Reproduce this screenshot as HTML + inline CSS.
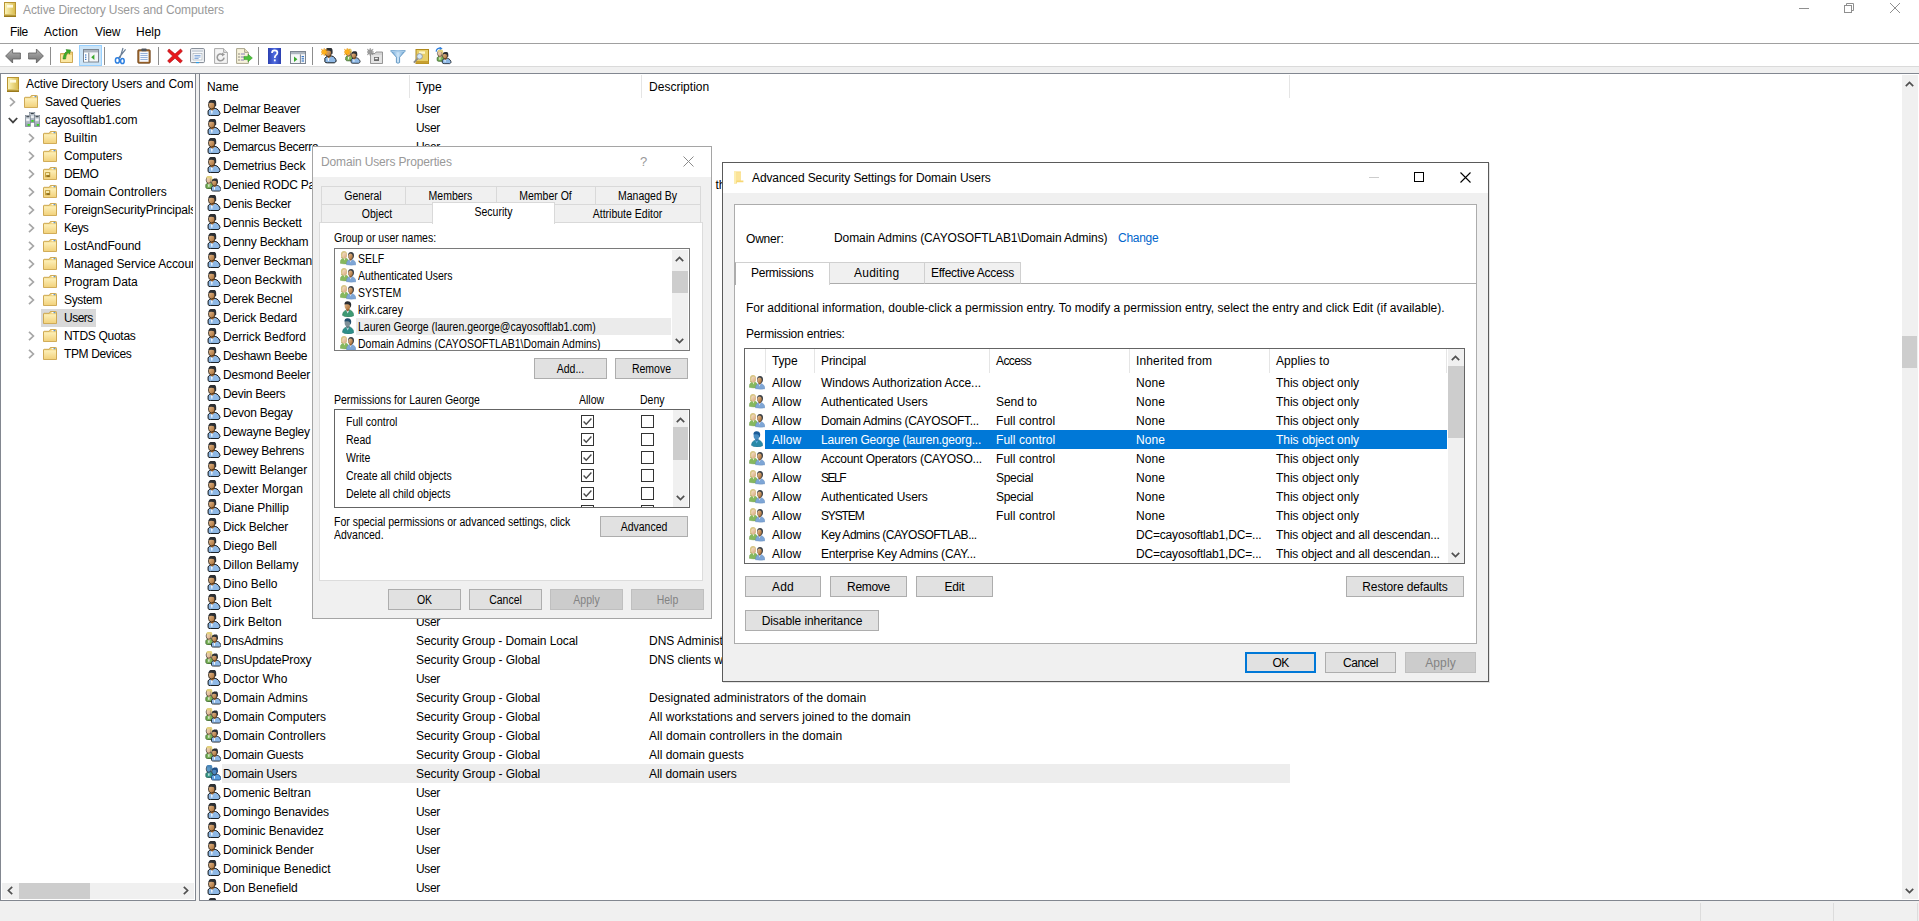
<!DOCTYPE html>
<html><head><meta charset="utf-8"><title>Active Directory Users and Computers</title>
<style>
html,body{margin:0;padding:0;}
body{width:1919px;height:921px;overflow:hidden;position:relative;background:#fff;font-family:"Liberation Sans", sans-serif;}
.b{position:absolute;box-sizing:border-box;}
.t{position:absolute;white-space:pre;font-family:"Liberation Sans", sans-serif;}
.c{position:absolute;overflow:hidden;}
</style></head><body>
<svg width="0" height="0" style="position:absolute"><defs><linearGradient id="gface" x1="0" y1="0" x2="1" y2="1"><stop offset="0" stop-color="#e9c49a"/><stop offset="1" stop-color="#a5672c"/></linearGradient><linearGradient id="gface2" x1="0" y1="0" x2="1" y2="1"><stop offset="0" stop-color="#f6e2c8"/><stop offset="1" stop-color="#d5a57c"/></linearGradient><linearGradient id="gfold" x1="0" y1="0" x2="0" y2="1"><stop offset="0" stop-color="#fdf0b9"/><stop offset="1" stop-color="#f2d27c"/></linearGradient><linearGradient id="gbook" x1="0" y1="0" x2="1" y2="0"><stop offset="0" stop-color="#fbf3b8"/><stop offset="1" stop-color="#d9bc4e"/></linearGradient><linearGradient id="gsrv" x1="0" y1="0" x2="0" y2="1"><stop offset="0" stop-color="#e8edf2"/><stop offset="1" stop-color="#8c99a6"/></linearGradient><linearGradient id="ghelp" x1="0" y1="0" x2="1" y2="0"><stop offset="0" stop-color="#2b3fb0"/><stop offset=".5" stop-color="#4f6be0"/><stop offset="1" stop-color="#2b3fb0"/></linearGradient><linearGradient id="gfun" x1="0" y1="0" x2="1" y2="0"><stop offset="0" stop-color="#5e9bd0"/><stop offset=".5" stop-color="#cfe6f8"/><stop offset="1" stop-color="#5e9bd0"/></linearGradient><linearGradient id="garr" x1="0" y1="0" x2="0" y2="1"><stop offset="0" stop-color="#b5b5b5"/><stop offset="1" stop-color="#6e6e6e"/></linearGradient><symbol id="u" viewBox="0 0 14 16" overflow="visible"><g transform="translate(0 0) scale(1)">
<path d="M1.1 14.6 L1.1 10.9 Q1.9 9.2 4.2 8.8 L8.2 8.4 Q10.2 8.7 11.6 10.5 Q13 12.4 13 13.7 Q12.6 15 11 15.6 L3.6 15.6 Q1.6 15.6 1.1 14.6Z" fill="#8fb9e6" stroke="#0c1116" stroke-width="1"/>
<path d="M3.9 10.5 L5.7 10.2 L5.3 13.8 L4.4 13.8Z" fill="#fff" opacity=".9"/>
<path d="M3.5 6.6 L7.1 6.6 L7.5 8.9 L5.1 10.7 L3.6 9.3Z" fill="#a5672c"/>
<ellipse cx="4.7" cy="5" rx="3.3" ry="4" fill="url(#gface)" stroke="#1c1814" stroke-width=".7"/>
<path d="M1.6 3 Q1.5 0 4.6 -0.2 L7.7 -0.2 Q9.2 0.8 9.2 3 L9.2 5.8 L7.9 6.8 L7.5 3.4 Q5.4 2.2 1.6 3Z" fill="#2d3034"/>
</g></symbol><symbol id="ug" viewBox="0 0 12 16" overflow="visible"><path d="M0.4 14.3 Q0.5 10.9 2.9 9.7 L4.8 8.7 L7.7 8.7 Q10.3 9.9 11.2 12 Q11.9 13.6 11.7 14.7 Q9.4 15.9 6 15.9 Q2.4 15.9 0.4 14.3Z" fill="#3f9a74" stroke="#2c7a58" stroke-width=".5"/>
<path d="M4.3 9.4 L5.7 12.6 L7.1 9.4 L6.2 9 L5 9Z" fill="#eef"/>
<path d="M4.2 6.6 L7.2 6.6 L7.3 9 L5.7 10.6 L4.2 9Z" fill="#9a6030"/>
<ellipse cx="5.5" cy="4.8" rx="2.9" ry="3.7" fill="url(#gface)"/>
<path d="M2.5 3.6 Q2.2 0.4 5.4 0.2 Q8.9 0.1 9.2 3.2 Q9.4 5.6 8.2 6.8 L7.9 4.4 Q6.6 2.6 2.5 3.6Z" fill="#2a2d30"/></symbol><symbol id="ud" viewBox="0 0 12 16" overflow="visible"><path d="M0.4 14.3 Q0.5 10.9 2.9 9.7 L4.8 8.7 L7.7 8.7 Q10.3 9.9 11.2 12 Q11.9 13.6 11.7 14.7 Q9.4 15.9 6 15.9 Q2.4 15.9 0.4 14.3Z" fill="#2d8d88" stroke="#1f6f6c" stroke-width=".5"/>
<path d="M4.3 9.4 L5.7 12.6 L7.1 9.4 L6.2 9 L5 9Z" fill="#bfe0e8"/>
<path d="M4.2 6.6 L7.2 6.6 L7.3 9 L5.7 10.6 L4.2 9Z" fill="#63777d"/>
<ellipse cx="5.5" cy="4.8" rx="2.9" ry="3.7" fill="#7f9097"/>
<path d="M2.5 3.6 Q2.2 0.4 5.4 0.2 Q8.9 0.1 9.2 3.2 Q9.4 5.6 8.2 6.8 L7.9 4.4 Q6.6 2.6 2.5 3.6Z" fill="#24506e"/></symbol><symbol id="us" viewBox="0 0 12 16" overflow="visible"><path d="M0.4 14.3 Q0.5 10.9 2.9 9.7 L4.8 8.7 L7.7 8.7 Q10.3 9.9 11.2 12 Q11.9 13.6 11.7 14.7 Q9.4 15.9 6 15.9 Q2.4 15.9 0.4 14.3Z" fill="#2a8aa8" stroke="#1f7090" stroke-width=".5"/>
<path d="M4.3 9.4 L5.7 12.6 L7.1 9.4 L6.2 9 L5 9Z" fill="#6ab8e8"/>
<path d="M4.2 6.6 L7.2 6.6 L7.3 9 L5.7 10.6 L4.2 9Z" fill="#3474a8"/>
<ellipse cx="5.5" cy="4.8" rx="2.9" ry="3.7" fill="#4a8ec2"/>
<path d="M2.5 3.6 Q2.2 0.4 5.4 0.2 Q8.9 0.1 9.2 3.2 Q9.4 5.6 8.2 6.8 L7.9 4.4 Q6.6 2.6 2.5 3.6Z" fill="#1b5c98"/></symbol><symbol id="g" viewBox="0 0 16 16" overflow="visible"><g transform="translate(0 0) scale(0.8)">
<path d="M1.1 14.6 L1.1 10.9 Q1.9 9.2 4.2 8.8 L8.2 8.4 Q10.2 8.7 11.6 10.5 Q13 12.4 13 13.7 Q12.6 15 11 15.6 L3.6 15.6 Q1.6 15.6 1.1 14.6Z" fill="#7db55c" stroke="#2f5a1e" stroke-width="1"/>
<path d="M3.9 10.5 L5.7 10.2 L5.3 13.8 L4.4 13.8Z" fill="#fff" opacity=".9"/>
<path d="M3.5 6.6 L7.1 6.6 L7.5 8.9 L5.1 10.7 L3.6 9.3Z" fill="#e0b48c"/>
<ellipse cx="4.7" cy="5" rx="3.3" ry="4" fill="url(#gface2)" stroke="#1c1814" stroke-width=".7"/>
<path d="M1.6 3 Q1.5 0 4.6 -0.2 L7.7 -0.2 Q9.2 0.8 9.2 3 L9.2 5.8 L7.9 6.8 L7.5 3.4 Q5.4 2.2 1.6 3Z" fill="#e3d07c"/>
</g><g transform="translate(5.6 2.6) scale(0.8)">
<path d="M1.1 14.6 L1.1 10.9 Q1.9 9.2 4.2 8.8 L8.2 8.4 Q10.2 8.7 11.6 10.5 Q13 12.4 13 13.7 Q12.6 15 11 15.6 L3.6 15.6 Q1.6 15.6 1.1 14.6Z" fill="#8fb9e6" stroke="#0c1116" stroke-width="1"/>
<path d="M3.9 10.5 L5.7 10.2 L5.3 13.8 L4.4 13.8Z" fill="#fff" opacity=".9"/>
<path d="M3.5 6.6 L7.1 6.6 L7.5 8.9 L5.1 10.7 L3.6 9.3Z" fill="#a5672c"/>
<ellipse cx="4.7" cy="5" rx="3.3" ry="4" fill="url(#gface)" stroke="#1c1814" stroke-width=".7"/>
<path d="M1.6 3 Q1.5 0 4.6 -0.2 L7.7 -0.2 Q9.2 0.8 9.2 3 L9.2 5.8 L7.9 6.8 L7.5 3.4 Q5.4 2.2 1.6 3Z" fill="#2d3034"/>
</g></symbol><symbol id="gs" viewBox="0 0 16 16" overflow="visible"><g transform="translate(0 0) scale(0.8)">
<path d="M1.1 14.6 L1.1 10.9 Q1.9 9.2 4.2 8.8 L8.2 8.4 Q10.2 8.7 11.6 10.5 Q13 12.4 13 13.7 Q12.6 15 11 15.6 L3.6 15.6 Q1.6 15.6 1.1 14.6Z" fill="#3a9a8a" stroke="#1e5a50" stroke-width="1"/>
<path d="M3.9 10.5 L5.7 10.2 L5.3 13.8 L4.4 13.8Z" fill="#fff" opacity=".9"/>
<path d="M3.5 6.6 L7.1 6.6 L7.5 8.9 L5.1 10.7 L3.6 9.3Z" fill="#4a88b8"/>
<ellipse cx="4.7" cy="5" rx="3.3" ry="4" fill="#5a98c8" stroke="#1c1814" stroke-width=".7"/>
<path d="M1.6 3 Q1.5 0 4.6 -0.2 L7.7 -0.2 Q9.2 0.8 9.2 3 L9.2 5.8 L7.9 6.8 L7.5 3.4 Q5.4 2.2 1.6 3Z" fill="#4a86b8"/>
</g><g transform="translate(5.6 2.6) scale(0.8)">
<path d="M1.1 14.6 L1.1 10.9 Q1.9 9.2 4.2 8.8 L8.2 8.4 Q10.2 8.7 11.6 10.5 Q13 12.4 13 13.7 Q12.6 15 11 15.6 L3.6 15.6 Q1.6 15.6 1.1 14.6Z" fill="#5aa0e0" stroke="#153a6a" stroke-width="1"/>
<path d="M3.9 10.5 L5.7 10.2 L5.3 13.8 L4.4 13.8Z" fill="#fff" opacity=".9"/>
<path d="M3.5 6.6 L7.1 6.6 L7.5 8.9 L5.1 10.7 L3.6 9.3Z" fill="#2d67a0"/>
<ellipse cx="4.7" cy="5" rx="3.3" ry="4" fill="#4a86c0" stroke="#1c1814" stroke-width=".7"/>
<path d="M1.6 3 Q1.5 0 4.6 -0.2 L7.7 -0.2 Q9.2 0.8 9.2 3 L9.2 5.8 L7.9 6.8 L7.5 3.4 Q5.4 2.2 1.6 3Z" fill="#1f4f86"/>
</g></symbol><symbol id="gd" viewBox="0 0 16 16" overflow="visible"><path d="M0.2 12.3 Q0.1 8.8 2.2 7.6 L4 6.8 L6.2 7 Q8.2 8.2 8.4 10 L8.4 12.7 Q4 13.3 0.2 12.3Z" fill="#86b85e" stroke="#6f9f4c" stroke-width=".4"/>
<path d="M3.6 7 L4.5 9.6 L5.4 7.2Z" fill="#eef6e6"/>
<ellipse cx="4" cy="3.7" rx="3.1" ry="3.7" fill="#d6c583"/>
<path d="M1.2 5.4 Q0.8 7 1.8 7.4 L3 6.6Z" fill="#bfae6c"/>
<ellipse cx="4.5" cy="4.4" rx="2.2" ry="2.8" fill="url(#gface2)"/>
<path d="M6.4 13.7 Q6.3 10 8.6 8.9 L10.2 8.2 L12.4 8.4 Q15 9.7 15.7 12 L15.9 13.8 Q11 14.5 6.4 13.7Z" fill="#7ea6d6" stroke="#6288b8" stroke-width=".4"/>
<path d="M9.6 8.6 L10.6 11.4 L11.6 8.8Z" fill="#eef4fb"/>
<path d="M9.4 6.6 L12 6.6 L12 8.6 L10.6 9.8 L9.4 8.6Z" fill="#9a6030"/>
<ellipse cx="11" cy="4.6" rx="3" ry="3.6" fill="#3a3f45"/>
<ellipse cx="10.5" cy="5.3" rx="2.2" ry="2.8" fill="url(#gface)"/></symbol><symbol id="f" viewBox="0 0 14 13"><path d="M7.3 0.5 H12.7 Q13.5 0.5 13.5 1.3 V12.5 H0.5 V3 Q0.5 2.3 1.2 2.3 H6.3 Z" fill="#f1d27a" stroke="#c8a24a" stroke-width=".9"/>
<rect x="1" y="3.3" width="12" height="8.8" fill="url(#gfold)"/>
<rect x="8.6" y="1.1" width="2.2" height="1.1" fill="#fff"/><rect x="10.6" y="1.1" width="1.7" height="1.1" fill="#4a8fe0"/></symbol><symbol id="fo" viewBox="0 0 14 13"><path d="M7.3 0.5 H12.7 Q13.5 0.5 13.5 1.3 V12.5 H0.5 V3 Q0.5 2.3 1.2 2.3 H6.3 Z" fill="#f1d27a" stroke="#c8a24a" stroke-width=".9"/>
<rect x="1" y="3.3" width="12" height="8.8" fill="url(#gfold)"/>
<rect x="8.6" y="1.1" width="2.2" height="1.1" fill="#fff"/><rect x="10.6" y="1.1" width="1.7" height="1.1" fill="#4a8fe0"/><rect x="2.2" y="5.2" width="5" height="5" fill="#b8932f"/><rect x="3" y="6" width="3.2" height="2" fill="#f6e7a8"/><rect x="4.2" y="8.6" width="2.4" height="1" fill="#6b4f12"/></symbol><symbol id="rb" viewBox="0 0 12 15"><rect x="0" y="0" width="12" height="15" fill="#b89432"/><rect x="1" y="1" width="10" height="11" fill="url(#gbook)"/><rect x="0.6" y="12" width="10.8" height="1.5" fill="#d9c268"/><rect x="3" y="2.8" width="6" height="2.8" fill="#fffbe0"/><rect x="0" y="13.6" width="12" height="1.4" fill="#9a7a1c"/></symbol><symbol id="dom" viewBox="0 0 15 15"><g><rect x="4.6" y="0.3" width="5.2" height="10" fill="url(#gsrv)" stroke="#6f7a86" stroke-width=".6"/><rect x="5.6" y="1" width="3.2" height="1.2" fill="#39424c"/><rect x="5.6" y="4.2" width="3.2" height="1.6" fill="#f4f6f8"/><rect x="6.4" y="8" width="2.2" height="1.8" fill="#37d51f"/></g>
<g><rect x="0.3" y="3.3" width="5.2" height="11.2" fill="url(#gsrv)" stroke="#6f7a86" stroke-width=".6"/><rect x="1.3" y="4.1" width="3.2" height="1.2" fill="#39424c"/><rect x="1.3" y="7" width="3.2" height="1.8" fill="#f4f6f8"/><rect x="2.6" y="12" width="2.2" height="1.8" fill="#37d51f"/></g>
<g><rect x="9.5" y="3.3" width="5.2" height="11.2" fill="url(#gsrv)" stroke="#6f7a86" stroke-width=".6"/><rect x="10.5" y="4.1" width="3.2" height="1.2" fill="#39424c"/><rect x="10.5" y="7" width="3.2" height="1.8" fill="#f4f6f8"/><rect x="11.8" y="12" width="2.2" height="1.8" fill="#37d51f"/></g></symbol><symbol id="chr" viewBox="0 0 7 10"><path d="M1 0.8 L5.4 5 L1 9.2" fill="none" stroke="#a6a6a6" stroke-width="1.7"/></symbol><symbol id="chd" viewBox="0 0 10 7"><path d="M0.8 1 L5 5.4 L9.2 1" fill="none" stroke="#404040" stroke-width="1.8"/></symbol><symbol id="au" viewBox="0 0 9 6"><path d="M0.8 5.2 L4.5 1.4 L8.2 5.2" fill="none" stroke="#505050" stroke-width="1.7"/></symbol><symbol id="ad" viewBox="0 0 9 6"><path d="M0.8 0.8 L4.5 4.6 L8.2 0.8" fill="none" stroke="#505050" stroke-width="1.7"/></symbol><symbol id="al" viewBox="0 0 6 9"><path d="M5.2 0.8 L1.4 4.5 L5.2 8.2" fill="none" stroke="#505050" stroke-width="1.7"/></symbol><symbol id="ar" viewBox="0 0 6 9"><path d="M0.8 0.8 L4.6 4.5 L0.8 8.2" fill="none" stroke="#505050" stroke-width="1.7"/></symbol></defs></svg><svg class="b" style="left:4px;top:2px;" width="12" height="15" viewBox="0 0 12 15"><use href="#rb"/></svg><span class="t" style="left:23px;top:4px;font-size:12px;line-height:12px;color:#999;letter-spacing:-0.09px;">Active Directory Users and Computers</span><svg class="b" style="left:1799px;top:4px;" width="12" height="12" viewBox="0 0 12 12"><path d="M0 4.5 H10" stroke="#8f8f8f" stroke-width="1"/></svg><svg class="b" style="left:1844px;top:3px;" width="12" height="12" viewBox="0 0 12 12"><path d="M2.5 2.5 V0.5 H9.5 V7.5 H7.5" fill="none" stroke="#8f8f8f"/><rect x="0.5" y="2.5" width="7" height="7" fill="none" stroke="#8f8f8f"/></svg><svg class="b" style="left:1890px;top:3px;" width="12" height="12" viewBox="0 0 12 12"><path d="M0 0 L10 10 M10 0 L0 10" stroke="#8f8f8f" stroke-width="1"/></svg><span class="t" style="left:10px;top:26px;font-size:12px;line-height:12px;color:#000;letter-spacing:-0.349px;">File</span><span class="t" style="left:44px;top:26px;font-size:12px;line-height:12px;color:#000;letter-spacing:0.12px;">Action</span><span class="t" style="left:95px;top:26px;font-size:12px;line-height:12px;color:#000;letter-spacing:-0.127px;">View</span><span class="t" style="left:136px;top:26px;font-size:12px;line-height:12px;color:#000;letter-spacing:0.017px;">Help</span><div class="b" style="left:0px;top:43px;width:1919px;height:1px;background:#a0a0a0;"></div><div class="b" style="left:0px;top:66px;width:1919px;height:1px;background:#dadada;"></div><div class="b" style="left:0px;top:67px;width:1919px;height:6px;background:#f0f0f0;"></div><div class="b" style="left:0px;top:73px;width:1919px;height:1px;background:#828790;"></div><svg class="b" style="left:5px;top:48px;" width="16" height="16" viewBox="0 0 16 16"><path d="M0.6 8 L7.6 1 V5 H15.4 V11 H7.6 V15 Z" fill="url(#garr)" stroke="#5a5a5a" stroke-width=".8"/></svg><svg class="b" style="left:28px;top:48px;" width="16" height="16" viewBox="0 0 16 16"><path d="M15.4 8 L8.4 1 V5 H0.6 V11 H8.4 V15 Z" fill="url(#garr)" stroke="#5a5a5a" stroke-width=".8"/></svg><div class="b" style="left:50px;top:47px;width:1px;height:18px;background:#8d8d8d;"></div><svg class="b" style="left:59px;top:48px;" width="16" height="16" viewBox="0 0 16 16"><path d="M1.5 5.5 H6 L7 4 H13.5 V14.5 H1.5Z" fill="#f3d27a" stroke="#c8a24a" stroke-width=".9"/><rect x="2" y="7" width="11" height="7" fill="#fbe7a2"/><path d="M4 11 Q4.5 5 8 3.4 L7 1.6 L11.6 2 L10.4 6.2 L9.4 4.6 Q6.8 6 6.6 11Z" fill="#3fae2a" stroke="#1f7a12" stroke-width=".5"/></svg><div class="b" style="left:79px;top:45px;width:23px;height:21px;background:#cce4f7;border:1px solid #99d1ff;"></div><svg class="b" style="left:83px;top:49px;" width="16" height="14" viewBox="0 0 16 14"><rect x=".5" y=".5" width="15" height="12.5" fill="#f4f6f8" stroke="#7d8590"/><rect x="1" y="1" width="14" height="2.4" fill="#aeb6c0"/><rect x="1" y="4" width="4.4" height="8.6" fill="#fff"/><path d="M5.8 3.6 V13" stroke="#7d8590"/><rect x="2" y="5.4" width="1.4" height="1.2" fill="#3a78c8"/><rect x="2" y="7.6" width="1.4" height="1.2" fill="#3a78c8"/><rect x="2" y="9.8" width="1.4" height="1.2" fill="#3a78c8"/><path d="M11.4 5.6 V11 L8.2 8.3Z" fill="#3aa82c"/></svg><div class="b" style="left:104px;top:47px;width:1px;height:18px;background:#8d8d8d;"></div><svg class="b" style="left:114px;top:47px;" width="14" height="18" viewBox="0 0 14 18"><path d="M9 1 L6 11 M11.6 2.4 L4.6 11" stroke="#6b7f96" stroke-width="1.2" fill="none"/><ellipse cx="3.4" cy="13.4" rx="2" ry="2.6" fill="none" stroke="#2d7fe0" stroke-width="1.5"/><ellipse cx="8.4" cy="14" rx="1.8" ry="2.6" fill="none" stroke="#2d7fe0" stroke-width="1.5"/></svg><svg class="b" style="left:137px;top:48px;" width="14" height="16" viewBox="0 0 14 16"><rect x=".8" y="1.8" width="12.4" height="13.4" rx="1" fill="#a0672c" stroke="#6b3f14" stroke-width=".8"/><rect x="2.4" y="3.4" width="9.2" height="10.4" fill="#f4f8ff"/><path d="M3.4 5.5 H10.6 M3.4 7.5 H10.6 M3.4 9.5 H10.6 M3.4 11.5 H10.6" stroke="#7f9fd0" stroke-width=".8"/><rect x="4.4" y=".6" width="5.2" height="2.6" rx=".6" fill="#50555c"/></svg><div class="b" style="left:158px;top:47px;width:1px;height:18px;background:#8d8d8d;"></div><svg class="b" style="left:167px;top:48px;" width="16" height="16" viewBox="0 0 16 16"><path d="M2 1 L8 6 L13.6 1 L15.4 3.2 L10.4 8 L15.4 13 L13.2 15 L8 10.2 L2.6 15 L0.6 12.8 L5.6 8 L0.6 3.2Z" fill="#e8181c" stroke="#a30c10" stroke-width=".6"/></svg><svg class="b" style="left:190px;top:48px;" width="15" height="16" viewBox="0 0 15 16"><rect x=".6" y=".6" width="13.8" height="14" rx="1" fill="#f6f8fa" stroke="#7d8590"/><rect x="2" y="2" width="11" height="2" fill="#cfd6de"/><rect x="3" y="5.6" width="9" height="6.4" fill="#fff" stroke="#9aa4b0" stroke-width=".6"/><path d="M4.4 7.4 H10.6 M4.4 9 H10.6 M4.4 10.6 H8.6" stroke="#5e8fcf" stroke-width=".8"/><rect x="6" y="14" width="3" height="1.2" fill="#2d9fe8"/></svg><svg class="b" style="left:214px;top:48px;" width="14" height="16" viewBox="0 0 14 16"><path d="M.6 .6 H9.6 L13.4 4.4 V15.4 H.6Z" fill="#f4f4f4" stroke="#a8a8a8"/><path d="M9.6 .6 V4.4 H13.4" fill="#e0e0e0" stroke="#a8a8a8"/><path d="M10 9.6 A3.4 3.4 0 1 1 8.6 6.6" fill="none" stroke="#9a9a9a" stroke-width="1.6"/><path d="M8 4.6 L11 6.6 L8 8.6Z" fill="#9a9a9a"/></svg><svg class="b" style="left:236px;top:48px;" width="17" height="16" viewBox="0 0 17 16"><path d="M.6 .6 H8.6 L12.4 4.4 V15.4 H.6Z" fill="#f8f3dc" stroke="#a8a48c"/><path d="M8.6 .6 V4.4 H12.4" fill="#e8e2c0" stroke="#a8a48c"/><path d="M2.4 6 H3.6 M2.4 9 H3.6 M2.4 12 H3.6" stroke="#444" stroke-width="1"/><path d="M4.8 6 H9 M4.8 9 H8 M4.8 12 H8" stroke="#7a6fb0" stroke-width=".9"/><path d="M8 8.4 H12 V6.2 L16.4 10 L12 13.8 V11.6 H8Z" fill="#4cc23a" stroke="#2a8a1c" stroke-width=".5"/></svg><div class="b" style="left:258px;top:47px;width:1px;height:18px;background:#8d8d8d;"></div><svg class="b" style="left:268px;top:48px;" width="13" height="16" viewBox="0 0 13 16"><rect x="0" y="0" width="13" height="16" fill="url(#ghelp)"/><path d="M4 5 Q4 2.4 6.6 2.4 Q9.4 2.4 9.4 4.8 Q9.4 6.4 7.8 7.4 Q6.8 8.2 6.8 10" fill="none" stroke="#fff" stroke-width="1.7"/><rect x="5.9" y="11.4" width="1.8" height="1.9" fill="#fff"/></svg><svg class="b" style="left:290px;top:51px;" width="16" height="13" viewBox="0 0 16 13"><rect x=".5" y=".5" width="15" height="12" fill="#f4f6f8" stroke="#7d8590"/><rect x="1" y="1" width="14" height="2.2" fill="#aeb6c0"/><path d="M10.4 3.4 V12.4" stroke="#7d8590"/><rect x="11.6" y="5" width="2.4" height="1.2" fill="#3a78c8"/><rect x="11.6" y="7.2" width="2.4" height="1.2" fill="#3a78c8"/><rect x="11.6" y="9.4" width="2.4" height="1.2" fill="#3a78c8"/><path d="M4 5.4 V11 L7.4 8.2Z" fill="#3aa82c"/></svg><div class="b" style="left:312px;top:47px;width:1px;height:18px;background:#8d8d8d;"></div><svg class="b" style="left:321px;top:48px;" width="16" height="16" viewBox="0 0 16 16"><use href="#u" x="3" y="0" width="14" height="16" transform="scale(.95)"/><path d="M3.2 0 L4 2.2 L6.2 1 L5 3.2 L7 4 L5 4.8 L6.2 7 L4 5.8 L3.2 8 L2.4 5.8 L0.2 7 L1.4 4.8 L-.4 4 L1.4 3.2 L0.2 1 L2.4 2.2Z" fill="#ffb11b" stroke="#e88a00" stroke-width=".3"/></svg><svg class="b" style="left:344px;top:48px;" width="17" height="16" viewBox="0 0 17 16"><use href="#g" x="1" y="1" width="16" height="16" transform="scale(.95)"/><path d="M3.2 0 L4 2.2 L6.2 1 L5 3.2 L7 4 L5 4.8 L6.2 7 L4 5.8 L3.2 8 L2.4 5.8 L0.2 7 L1.4 4.8 L-.4 4 L1.4 3.2 L0.2 1 L2.4 2.2Z" fill="#ffb11b" stroke="#e88a00" stroke-width=".3"/></svg><svg class="b" style="left:367px;top:48px;" width="17" height="16" viewBox="0 0 17 16"><path d="M3.5 5.5 H8 L9 4 H15.5 V15.5 H3.5Z" fill="#d4d4d4" stroke="#8c8c8c" stroke-width=".9"/><rect x="4.2" y="7" width="10.6" height="8" fill="#e4e4e4"/><rect x="7" y="9" width="5" height="4" fill="#6a6a6a"/><rect x="7.8" y="9.8" width="3" height="1.4" fill="#f0f0f0"/><path d="M3.2 0 L4 2.2 L6.2 1 L5 3.2 L7 4 L5 4.8 L6.2 7 L4 5.8 L3.2 8 L2.4 5.8 L0.2 7 L1.4 4.8 L-.4 4 L1.4 3.2 L0.2 1 L2.4 2.2Z" fill="#9a9a9a" stroke="#7a7a7a" stroke-width=".3"/></svg><svg class="b" style="left:390px;top:50px;" width="16" height="14" viewBox="0 0 16 14"><path d="M.6 .8 Q8 -.6 15.4 .8 L9.6 7.2 V12.6 Q8 13.8 6.4 12.6 V7.2Z" fill="url(#gfun)" stroke="#4a86b8" stroke-width=".8"/><ellipse cx="8" cy="1.2" rx="7" ry="1" fill="#a8cbe8"/></svg><svg class="b" style="left:413px;top:49px;" width="16" height="16" viewBox="0 0 16 16"><rect x="3" y=".5" width="12.5" height="14" fill="#e8cf68" stroke="#b08a1c"/><rect x="3" y="12" width="12.5" height="2.5" fill="#c8a030"/><rect x="6" y="2.4" width="6" height="2.4" fill="#fdf6c8"/><circle cx="6.6" cy="7.4" r="2.8" fill="#cfe6f8" stroke="#9a9a9a" stroke-width="1"/><path d="M4.6 9.6 L.8 13.6" stroke="#8a8a8a" stroke-width="1.6"/></svg><svg class="b" style="left:435px;top:47px;" width="18" height="18" viewBox="0 0 18 18"><use href="#g" x="1.5" y="3" width="16" height="16" transform="scale(.92)"/><path d="M1.2 4.6 Q1.6 1 5.4 1.2" fill="none" stroke="#2d7fe0" stroke-width="1.3"/><path d="M4.6 -.4 L7.6 1.4 L4.8 3Z" fill="#2d7fe0"/></svg><div class="b" style="left:0px;top:73px;width:196px;height:828px;background:#fff;border:1px solid #828790;"></div><div class="b" style="left:196px;top:74px;width:3px;height:827px;background:#f0f0f0;"></div><div class="c" style="left:2px;top:74px;width:191px;height:809px;"><svg class="b" style="left:5px;top:3px;" width="12" height="15" viewBox="0 0 12 15"><use href="#rb"/></svg><span class="t" style="left:24px;top:4px;font-size:12px;line-height:12px;color:#000;letter-spacing:-0.111px;">Active Directory Users and Com</span><svg class="b" style="left:7px;top:23px;" width="7" height="10" viewBox="0 0 7 10"><use href="#chr"/></svg><svg class="b" style="left:22px;top:21px;" width="14" height="13" viewBox="0 0 14 13"><use href="#f"/></svg><span class="t" style="left:43px;top:22px;font-size:12px;line-height:12px;color:#000;letter-spacing:-0.306px;">Saved Queries</span><svg class="b" style="left:6px;top:43px;" width="10" height="7" viewBox="0 0 10 7"><use href="#chd"/></svg><svg class="b" style="left:23px;top:38px;" width="15" height="15" viewBox="0 0 15 15"><use href="#dom"/></svg><span class="t" style="left:43px;top:40px;font-size:12px;line-height:12px;color:#000;letter-spacing:-0.058px;">cayosoftlab1.com</span><svg class="b" style="left:26px;top:59px;" width="7" height="10" viewBox="0 0 7 10"><use href="#chr"/></svg><svg class="b" style="left:41px;top:57px;" width="14" height="13" viewBox="0 0 14 13"><use href="#f"/></svg><span class="t" style="left:62px;top:58px;font-size:12px;line-height:12px;color:#000;letter-spacing:0.076px;">Builtin</span><svg class="b" style="left:26px;top:77px;" width="7" height="10" viewBox="0 0 7 10"><use href="#chr"/></svg><svg class="b" style="left:41px;top:75px;" width="14" height="13" viewBox="0 0 14 13"><use href="#f"/></svg><span class="t" style="left:62px;top:76px;font-size:12px;line-height:12px;color:#000;letter-spacing:-0.052px;">Computers</span><svg class="b" style="left:26px;top:95px;" width="7" height="10" viewBox="0 0 7 10"><use href="#chr"/></svg><svg class="b" style="left:41px;top:93px;" width="14" height="13" viewBox="0 0 14 13"><use href="#fo"/></svg><span class="t" style="left:62px;top:94px;font-size:12px;line-height:12px;color:#000;letter-spacing:-0.423px;">DEMO</span><svg class="b" style="left:26px;top:113px;" width="7" height="10" viewBox="0 0 7 10"><use href="#chr"/></svg><svg class="b" style="left:41px;top:111px;" width="14" height="13" viewBox="0 0 14 13"><use href="#fo"/></svg><span class="t" style="left:62px;top:112px;font-size:12px;line-height:12px;color:#000;letter-spacing:-0.001px;">Domain Controllers</span><svg class="b" style="left:26px;top:131px;" width="7" height="10" viewBox="0 0 7 10"><use href="#chr"/></svg><svg class="b" style="left:41px;top:129px;" width="14" height="13" viewBox="0 0 14 13"><use href="#f"/></svg><span class="t" style="left:62px;top:130px;font-size:12px;line-height:12px;color:#000;letter-spacing:-0.156px;">ForeignSecurityPrincipals</span><svg class="b" style="left:26px;top:149px;" width="7" height="10" viewBox="0 0 7 10"><use href="#chr"/></svg><svg class="b" style="left:41px;top:147px;" width="14" height="13" viewBox="0 0 14 13"><use href="#f"/></svg><span class="t" style="left:62px;top:148px;font-size:12px;line-height:12px;color:#000;letter-spacing:-0.642px;">Keys</span><svg class="b" style="left:26px;top:167px;" width="7" height="10" viewBox="0 0 7 10"><use href="#chr"/></svg><svg class="b" style="left:41px;top:165px;" width="14" height="13" viewBox="0 0 14 13"><use href="#f"/></svg><span class="t" style="left:62px;top:166px;font-size:12px;line-height:12px;color:#000;letter-spacing:-0.093px;">LostAndFound</span><svg class="b" style="left:26px;top:185px;" width="7" height="10" viewBox="0 0 7 10"><use href="#chr"/></svg><svg class="b" style="left:41px;top:183px;" width="14" height="13" viewBox="0 0 14 13"><use href="#f"/></svg><span class="t" style="left:62px;top:184px;font-size:12px;line-height:12px;color:#000;letter-spacing:-0.117px;">Managed Service Accounts</span><svg class="b" style="left:26px;top:203px;" width="7" height="10" viewBox="0 0 7 10"><use href="#chr"/></svg><svg class="b" style="left:41px;top:201px;" width="14" height="13" viewBox="0 0 14 13"><use href="#f"/></svg><span class="t" style="left:62px;top:202px;font-size:12px;line-height:12px;color:#000;letter-spacing:-0.094px;">Program Data</span><svg class="b" style="left:26px;top:221px;" width="7" height="10" viewBox="0 0 7 10"><use href="#chr"/></svg><svg class="b" style="left:41px;top:219px;" width="14" height="13" viewBox="0 0 14 13"><use href="#f"/></svg><span class="t" style="left:62px;top:220px;font-size:12px;line-height:12px;color:#000;letter-spacing:-0.35px;">System</span><div class="b" style="left:39px;top:235px;width:55px;height:18px;background:#d9d9d9;"></div><svg class="b" style="left:41px;top:237px;" width="14" height="13" viewBox="0 0 14 13"><use href="#f"/></svg><span class="t" style="left:62px;top:238px;font-size:12px;line-height:12px;color:#000;letter-spacing:-0.496px;">Users</span><svg class="b" style="left:26px;top:257px;" width="7" height="10" viewBox="0 0 7 10"><use href="#chr"/></svg><svg class="b" style="left:41px;top:255px;" width="14" height="13" viewBox="0 0 14 13"><use href="#f"/></svg><span class="t" style="left:62px;top:256px;font-size:12px;line-height:12px;color:#000;letter-spacing:-0.293px;">NTDS Quotas</span><svg class="b" style="left:26px;top:275px;" width="7" height="10" viewBox="0 0 7 10"><use href="#chr"/></svg><svg class="b" style="left:41px;top:273px;" width="14" height="13" viewBox="0 0 14 13"><use href="#f"/></svg><span class="t" style="left:62px;top:274px;font-size:12px;line-height:12px;color:#000;letter-spacing:-0.366px;">TPM Devices</span></div><div class="b" style="left:2px;top:883px;width:192px;height:16px;background:#f0f0f0;"></div><div class="b" style="left:19px;top:883px;width:71px;height:16px;background:#cdcdcd;"></div><svg class="b" style="left:7px;top:886px;" width="6" height="9" viewBox="0 0 6 9"><use href="#al"/></svg><svg class="b" style="left:183px;top:886px;" width="6" height="9" viewBox="0 0 6 9"><use href="#ar"/></svg><div class="b" style="left:199px;top:73px;width:1721px;height:828px;background:#fff;border:1px solid #828790;border-right:none;"></div><span class="t" style="left:207px;top:81px;font-size:12px;line-height:12px;color:#000;letter-spacing:-0.085px;">Name</span><span class="t" style="left:416px;top:81px;font-size:12px;line-height:12px;color:#000;letter-spacing:-0.154px;">Type</span><span class="t" style="left:649px;top:81px;font-size:12px;line-height:12px;color:#000;letter-spacing:0.019px;">Description</span><div class="b" style="left:409px;top:75px;width:1px;height:23px;background:#e5e5e5;"></div><div class="b" style="left:641px;top:75px;width:1px;height:23px;background:#e5e5e5;"></div><div class="b" style="left:1289px;top:75px;width:1px;height:23px;background:#e5e5e5;"></div><div class="c" style="left:200px;top:99px;width:1702px;height:801px;"><svg class="b" style="left:7px;top:1px;" width="14" height="16" viewBox="0 0 14 16"><use href="#u"/></svg><span class="t" style="left:23px;top:4px;font-size:12px;line-height:12px;color:#000;letter-spacing:-0.237px;">Delmar Beaver</span><span class="t" style="left:216px;top:4px;font-size:12px;line-height:12px;color:#000;letter-spacing:-0.392px;">User</span><svg class="b" style="left:7px;top:20px;" width="14" height="16" viewBox="0 0 14 16"><use href="#u"/></svg><span class="t" style="left:23px;top:23px;font-size:12px;line-height:12px;color:#000;letter-spacing:-0.274px;">Delmer Beavers</span><span class="t" style="left:216px;top:23px;font-size:12px;line-height:12px;color:#000;letter-spacing:-0.392px;">User</span><svg class="b" style="left:7px;top:39px;" width="14" height="16" viewBox="0 0 14 16"><use href="#u"/></svg><span class="t" style="left:23px;top:42px;font-size:12px;line-height:12px;color:#000;letter-spacing:-0.288px;">Demarcus Becerra</span><span class="t" style="left:216px;top:42px;font-size:12px;line-height:12px;color:#000;letter-spacing:-0.392px;">User</span><svg class="b" style="left:7px;top:58px;" width="14" height="16" viewBox="0 0 14 16"><use href="#u"/></svg><span class="t" style="left:23px;top:61px;font-size:12px;line-height:12px;color:#000;letter-spacing:-0.175px;">Demetrius Beck</span><span class="t" style="left:216px;top:61px;font-size:12px;line-height:12px;color:#000;letter-spacing:-0.392px;">User</span><svg class="b" style="left:5px;top:77px;" width="16" height="16" viewBox="0 0 16 16"><use href="#g"/></svg><span class="t" style="left:23px;top:80px;font-size:12px;line-height:12px;color:#000;letter-spacing:-0.19px;">Denied RODC Password Replication Group</span><span class="t" style="left:216px;top:80px;font-size:12px;line-height:12px;color:#000;letter-spacing:-0.073px;">Security Group - Domain Local</span><span class="t" style="left:449px;top:80px;font-size:12px;line-height:12px;color:#000;letter-spacing:0.036px;">Members in this group cannot have their passwords replicated to any read-only domain controllers in the domain</span><svg class="b" style="left:7px;top:96px;" width="14" height="16" viewBox="0 0 14 16"><use href="#u"/></svg><span class="t" style="left:23px;top:99px;font-size:12px;line-height:12px;color:#000;letter-spacing:-0.292px;">Denis Becker</span><span class="t" style="left:216px;top:99px;font-size:12px;line-height:12px;color:#000;letter-spacing:-0.392px;">User</span><svg class="b" style="left:7px;top:115px;" width="14" height="16" viewBox="0 0 14 16"><use href="#u"/></svg><span class="t" style="left:23px;top:118px;font-size:12px;line-height:12px;color:#000;letter-spacing:-0.15px;">Dennis Beckett</span><span class="t" style="left:216px;top:118px;font-size:12px;line-height:12px;color:#000;letter-spacing:-0.392px;">User</span><svg class="b" style="left:7px;top:134px;" width="14" height="16" viewBox="0 0 14 16"><use href="#u"/></svg><span class="t" style="left:23px;top:137px;font-size:12px;line-height:12px;color:#000;letter-spacing:-0.22px;">Denny Beckham</span><span class="t" style="left:216px;top:137px;font-size:12px;line-height:12px;color:#000;letter-spacing:-0.392px;">User</span><svg class="b" style="left:7px;top:153px;" width="14" height="16" viewBox="0 0 14 16"><use href="#u"/></svg><span class="t" style="left:23px;top:156px;font-size:12px;line-height:12px;color:#000;letter-spacing:-0.23px;">Denver Beckman</span><span class="t" style="left:216px;top:156px;font-size:12px;line-height:12px;color:#000;letter-spacing:-0.392px;">User</span><svg class="b" style="left:7px;top:172px;" width="14" height="16" viewBox="0 0 14 16"><use href="#u"/></svg><span class="t" style="left:23px;top:175px;font-size:12px;line-height:12px;color:#000;letter-spacing:-0.09px;">Deon Beckwith</span><span class="t" style="left:216px;top:175px;font-size:12px;line-height:12px;color:#000;letter-spacing:-0.392px;">User</span><svg class="b" style="left:7px;top:191px;" width="14" height="16" viewBox="0 0 14 16"><use href="#u"/></svg><span class="t" style="left:23px;top:194px;font-size:12px;line-height:12px;color:#000;letter-spacing:-0.249px;">Derek Becnel</span><span class="t" style="left:216px;top:194px;font-size:12px;line-height:12px;color:#000;letter-spacing:-0.392px;">User</span><svg class="b" style="left:7px;top:210px;" width="14" height="16" viewBox="0 0 14 16"><use href="#u"/></svg><span class="t" style="left:23px;top:213px;font-size:12px;line-height:12px;color:#000;letter-spacing:-0.148px;">Derick Bedard</span><span class="t" style="left:216px;top:213px;font-size:12px;line-height:12px;color:#000;letter-spacing:-0.392px;">User</span><svg class="b" style="left:7px;top:229px;" width="14" height="16" viewBox="0 0 14 16"><use href="#u"/></svg><span class="t" style="left:23px;top:232px;font-size:12px;line-height:12px;color:#000;letter-spacing:-0.026px;">Derrick Bedford</span><span class="t" style="left:216px;top:232px;font-size:12px;line-height:12px;color:#000;letter-spacing:-0.392px;">User</span><svg class="b" style="left:7px;top:248px;" width="14" height="16" viewBox="0 0 14 16"><use href="#u"/></svg><span class="t" style="left:23px;top:251px;font-size:12px;line-height:12px;color:#000;letter-spacing:-0.3px;">Deshawn Beebe</span><span class="t" style="left:216px;top:251px;font-size:12px;line-height:12px;color:#000;letter-spacing:-0.392px;">User</span><svg class="b" style="left:7px;top:267px;" width="14" height="16" viewBox="0 0 14 16"><use href="#u"/></svg><span class="t" style="left:23px;top:270px;font-size:12px;line-height:12px;color:#000;letter-spacing:-0.167px;">Desmond Beeler</span><span class="t" style="left:216px;top:270px;font-size:12px;line-height:12px;color:#000;letter-spacing:-0.392px;">User</span><svg class="b" style="left:7px;top:286px;" width="14" height="16" viewBox="0 0 14 16"><use href="#u"/></svg><span class="t" style="left:23px;top:289px;font-size:12px;line-height:12px;color:#000;letter-spacing:-0.296px;">Devin Beers</span><span class="t" style="left:216px;top:289px;font-size:12px;line-height:12px;color:#000;letter-spacing:-0.392px;">User</span><svg class="b" style="left:7px;top:305px;" width="14" height="16" viewBox="0 0 14 16"><use href="#u"/></svg><span class="t" style="left:23px;top:308px;font-size:12px;line-height:12px;color:#000;letter-spacing:-0.218px;">Devon Begay</span><span class="t" style="left:216px;top:308px;font-size:12px;line-height:12px;color:#000;letter-spacing:-0.392px;">User</span><svg class="b" style="left:7px;top:324px;" width="14" height="16" viewBox="0 0 14 16"><use href="#u"/></svg><span class="t" style="left:23px;top:327px;font-size:12px;line-height:12px;color:#000;letter-spacing:-0.235px;">Dewayne Begley</span><span class="t" style="left:216px;top:327px;font-size:12px;line-height:12px;color:#000;letter-spacing:-0.392px;">User</span><svg class="b" style="left:7px;top:343px;" width="14" height="16" viewBox="0 0 14 16"><use href="#u"/></svg><span class="t" style="left:23px;top:346px;font-size:12px;line-height:12px;color:#000;letter-spacing:-0.288px;">Dewey Behrens</span><span class="t" style="left:216px;top:346px;font-size:12px;line-height:12px;color:#000;letter-spacing:-0.392px;">User</span><svg class="b" style="left:7px;top:362px;" width="14" height="16" viewBox="0 0 14 16"><use href="#u"/></svg><span class="t" style="left:23px;top:365px;font-size:12px;line-height:12px;color:#000;letter-spacing:-0.038px;">Dewitt Belanger</span><span class="t" style="left:216px;top:365px;font-size:12px;line-height:12px;color:#000;letter-spacing:-0.392px;">User</span><svg class="b" style="left:7px;top:381px;" width="14" height="16" viewBox="0 0 14 16"><use href="#u"/></svg><span class="t" style="left:23px;top:384px;font-size:12px;line-height:12px;color:#000;letter-spacing:0.044px;">Dexter Morgan</span><span class="t" style="left:216px;top:384px;font-size:12px;line-height:12px;color:#000;letter-spacing:-0.392px;">User</span><svg class="b" style="left:7px;top:400px;" width="14" height="16" viewBox="0 0 14 16"><use href="#u"/></svg><span class="t" style="left:23px;top:403px;font-size:12px;line-height:12px;color:#000;letter-spacing:-0.059px;">Diane Phillip</span><span class="t" style="left:216px;top:403px;font-size:12px;line-height:12px;color:#000;letter-spacing:-0.392px;">User</span><svg class="b" style="left:7px;top:419px;" width="14" height="16" viewBox="0 0 14 16"><use href="#u"/></svg><span class="t" style="left:23px;top:422px;font-size:12px;line-height:12px;color:#000;letter-spacing:-0.201px;">Dick Belcher</span><span class="t" style="left:216px;top:422px;font-size:12px;line-height:12px;color:#000;letter-spacing:-0.392px;">User</span><svg class="b" style="left:7px;top:438px;" width="14" height="16" viewBox="0 0 14 16"><use href="#u"/></svg><span class="t" style="left:23px;top:441px;font-size:12px;line-height:12px;color:#000;letter-spacing:-0.077px;">Diego Bell</span><span class="t" style="left:216px;top:441px;font-size:12px;line-height:12px;color:#000;letter-spacing:-0.392px;">User</span><svg class="b" style="left:7px;top:457px;" width="14" height="16" viewBox="0 0 14 16"><use href="#u"/></svg><span class="t" style="left:23px;top:460px;font-size:12px;line-height:12px;color:#000;letter-spacing:-0.046px;">Dillon Bellamy</span><span class="t" style="left:216px;top:460px;font-size:12px;line-height:12px;color:#000;letter-spacing:-0.392px;">User</span><svg class="b" style="left:7px;top:476px;" width="14" height="16" viewBox="0 0 14 16"><use href="#u"/></svg><span class="t" style="left:23px;top:479px;font-size:12px;line-height:12px;color:#000;letter-spacing:-0.029px;">Dino Bello</span><span class="t" style="left:216px;top:479px;font-size:12px;line-height:12px;color:#000;letter-spacing:-0.392px;">User</span><svg class="b" style="left:7px;top:495px;" width="14" height="16" viewBox="0 0 14 16"><use href="#u"/></svg><span class="t" style="left:23px;top:498px;font-size:12px;line-height:12px;color:#000;letter-spacing:-0.016px;">Dion Belt</span><span class="t" style="left:216px;top:498px;font-size:12px;line-height:12px;color:#000;letter-spacing:-0.392px;">User</span><svg class="b" style="left:7px;top:514px;" width="14" height="16" viewBox="0 0 14 16"><use href="#u"/></svg><span class="t" style="left:23px;top:517px;font-size:12px;line-height:12px;color:#000;letter-spacing:-0.001px;">Dirk Belton</span><span class="t" style="left:216px;top:517px;font-size:12px;line-height:12px;color:#000;letter-spacing:-0.392px;">User</span><svg class="b" style="left:5px;top:533px;" width="16" height="16" viewBox="0 0 16 16"><use href="#g"/></svg><span class="t" style="left:23px;top:536px;font-size:12px;line-height:12px;color:#000;letter-spacing:-0.133px;">DnsAdmins</span><span class="t" style="left:216px;top:536px;font-size:12px;line-height:12px;color:#000;letter-spacing:-0.073px;">Security Group - Domain Local</span><span class="t" style="left:449px;top:536px;font-size:12px;line-height:12px;color:#000;letter-spacing:-0.011px;">DNS Administrators Group</span><svg class="b" style="left:5px;top:552px;" width="16" height="16" viewBox="0 0 16 16"><use href="#g"/></svg><span class="t" style="left:23px;top:555px;font-size:12px;line-height:12px;color:#000;letter-spacing:-0.172px;">DnsUpdateProxy</span><span class="t" style="left:216px;top:555px;font-size:12px;line-height:12px;color:#000;letter-spacing:-0.055px;">Security Group - Global</span><span class="t" style="left:449px;top:555px;font-size:12px;line-height:12px;color:#000;letter-spacing:-0.061px;">DNS clients who are permitted to perform dynamic updates on behalf of some other clients (such as DHCP servers).</span><svg class="b" style="left:7px;top:571px;" width="14" height="16" viewBox="0 0 14 16"><use href="#u"/></svg><span class="t" style="left:23px;top:574px;font-size:12px;line-height:12px;color:#000;letter-spacing:0.121px;">Doctor Who</span><span class="t" style="left:216px;top:574px;font-size:12px;line-height:12px;color:#000;letter-spacing:-0.392px;">User</span><svg class="b" style="left:5px;top:590px;" width="16" height="16" viewBox="0 0 16 16"><use href="#g"/></svg><span class="t" style="left:23px;top:593px;font-size:12px;line-height:12px;color:#000;letter-spacing:0.052px;">Domain Admins</span><span class="t" style="left:216px;top:593px;font-size:12px;line-height:12px;color:#000;letter-spacing:-0.055px;">Security Group - Global</span><span class="t" style="left:449px;top:593px;font-size:12px;line-height:12px;color:#000;letter-spacing:0.044px;">Designated administrators of the domain</span><svg class="b" style="left:5px;top:609px;" width="16" height="16" viewBox="0 0 16 16"><use href="#g"/></svg><span class="t" style="left:23px;top:612px;font-size:12px;line-height:12px;color:#000;letter-spacing:-0.02px;">Domain Computers</span><span class="t" style="left:216px;top:612px;font-size:12px;line-height:12px;color:#000;letter-spacing:-0.055px;">Security Group - Global</span><span class="t" style="left:449px;top:612px;font-size:12px;line-height:12px;color:#000;letter-spacing:0.018px;">All workstations and servers joined to the domain</span><svg class="b" style="left:5px;top:628px;" width="16" height="16" viewBox="0 0 16 16"><use href="#g"/></svg><span class="t" style="left:23px;top:631px;font-size:12px;line-height:12px;color:#000;letter-spacing:-0.001px;">Domain Controllers</span><span class="t" style="left:216px;top:631px;font-size:12px;line-height:12px;color:#000;letter-spacing:-0.055px;">Security Group - Global</span><span class="t" style="left:449px;top:631px;font-size:12px;line-height:12px;color:#000;letter-spacing:0.086px;">All domain controllers in the domain</span><svg class="b" style="left:5px;top:647px;" width="16" height="16" viewBox="0 0 16 16"><use href="#g"/></svg><span class="t" style="left:23px;top:650px;font-size:12px;line-height:12px;color:#000;letter-spacing:-0.178px;">Domain Guests</span><span class="t" style="left:216px;top:650px;font-size:12px;line-height:12px;color:#000;letter-spacing:-0.055px;">Security Group - Global</span><span class="t" style="left:449px;top:650px;font-size:12px;line-height:12px;color:#000;letter-spacing:-0.002px;">All domain guests</span><div class="b" style="left:22px;top:665px;width:1068px;height:19px;background:#ededed;"></div><svg class="b" style="left:5px;top:666px;" width="16" height="16" viewBox="0 0 16 16"><use href="#gs"/></svg><span class="t" style="left:23px;top:669px;font-size:12px;line-height:12px;color:#000;letter-spacing:-0.194px;">Domain Users</span><span class="t" style="left:216px;top:669px;font-size:12px;line-height:12px;color:#000;letter-spacing:-0.055px;">Security Group - Global</span><span class="t" style="left:449px;top:669px;font-size:12px;line-height:12px;color:#000;letter-spacing:-0.061px;">All domain users</span><svg class="b" style="left:7px;top:685px;" width="14" height="16" viewBox="0 0 14 16"><use href="#u"/></svg><span class="t" style="left:23px;top:688px;font-size:12px;line-height:12px;color:#000;letter-spacing:-0.064px;">Domenic Beltran</span><span class="t" style="left:216px;top:688px;font-size:12px;line-height:12px;color:#000;letter-spacing:-0.392px;">User</span><svg class="b" style="left:7px;top:704px;" width="14" height="16" viewBox="0 0 14 16"><use href="#u"/></svg><span class="t" style="left:23px;top:707px;font-size:12px;line-height:12px;color:#000;letter-spacing:-0.086px;">Domingo Benavides</span><span class="t" style="left:216px;top:707px;font-size:12px;line-height:12px;color:#000;letter-spacing:-0.392px;">User</span><svg class="b" style="left:7px;top:723px;" width="14" height="16" viewBox="0 0 14 16"><use href="#u"/></svg><span class="t" style="left:23px;top:726px;font-size:12px;line-height:12px;color:#000;letter-spacing:-0.122px;">Dominic Benavidez</span><span class="t" style="left:216px;top:726px;font-size:12px;line-height:12px;color:#000;letter-spacing:-0.392px;">User</span><svg class="b" style="left:7px;top:742px;" width="14" height="16" viewBox="0 0 14 16"><use href="#u"/></svg><span class="t" style="left:23px;top:745px;font-size:12px;line-height:12px;color:#000;letter-spacing:-0.053px;">Dominick Bender</span><span class="t" style="left:216px;top:745px;font-size:12px;line-height:12px;color:#000;letter-spacing:-0.392px;">User</span><svg class="b" style="left:7px;top:761px;" width="14" height="16" viewBox="0 0 14 16"><use href="#u"/></svg><span class="t" style="left:23px;top:764px;font-size:12px;line-height:12px;color:#000;letter-spacing:0.008px;">Dominique Benedict</span><span class="t" style="left:216px;top:764px;font-size:12px;line-height:12px;color:#000;letter-spacing:-0.392px;">User</span><svg class="b" style="left:7px;top:780px;" width="14" height="16" viewBox="0 0 14 16"><use href="#u"/></svg><span class="t" style="left:23px;top:783px;font-size:12px;line-height:12px;color:#000;letter-spacing:-0.058px;">Don Benefield</span><span class="t" style="left:216px;top:783px;font-size:12px;line-height:12px;color:#000;letter-spacing:-0.392px;">User</span><svg class="b" style="left:7px;top:799px;" width="14" height="16" viewBox="0 0 14 16"><use href="#u"/></svg></div><div class="b" style="left:1902px;top:75px;width:16px;height:824px;background:#f0f0f0;"></div><div class="b" style="left:1902px;top:336px;width:15px;height:32px;background:#cdcdcd;"></div><svg class="b" style="left:1905px;top:81px;" width="9" height="6" viewBox="0 0 9 6"><use href="#au"/></svg><svg class="b" style="left:1905px;top:888px;" width="9" height="6" viewBox="0 0 9 6"><use href="#ad"/></svg><div class="b" style="left:0px;top:901px;width:1919px;height:20px;background:#f0f0f0;"></div><div class="b" style="left:1700px;top:903px;width:1px;height:18px;background:#dcdcdc;"></div><div class="b" style="left:1833px;top:903px;width:1px;height:18px;background:#dcdcdc;"></div><div class="b" style="left:1917px;top:903px;width:1px;height:18px;background:#dcdcdc;"></div><div class="b" style="left:312px;top:146px;width:400px;height:473px;background:#f0f0f0;border:1px solid #a5a5a5;"></div><div class="b" style="left:313px;top:147px;width:398px;height:30px;background:#fff;"></div><span class="t" style="left:321px;top:156px;font-size:12px;line-height:12px;color:#999;letter-spacing:-0.143px;">Domain Users Properties</span><span class="t" style="left:640px;top:156px;font-size:12px;line-height:12px;color:#999;letter-spacing:-1.293px;font-size:13px;">?</span><svg class="b" style="left:683px;top:156px;" width="11" height="11" viewBox="0 0 11 11"><path d="M0.5 0.5 L10.5 10.5 M10.5 0.5 L0.5 10.5" stroke="#8a8a8a" stroke-width="1"/></svg><div class="b" style="left:319px;top:222px;width:384px;height:359px;background:#fff;border:1px solid #dcdcdc;"></div><div class="b" style="left:321px;top:186px;width:85px;height:19px;background:#f0f0f0;border:1px solid #d9d9d9;"></div><span class="t" style="left:321px;width:84px;text-align:center;top:190px;font-size:12px;line-height:12px;color:#000;letter-spacing:0px;transform:scaleX(0.875);transform-origin:50% 0;">General</span><div class="b" style="left:405px;top:186px;width:92px;height:19px;background:#f0f0f0;border:1px solid #d9d9d9;"></div><span class="t" style="left:405px;width:91px;text-align:center;top:190px;font-size:12px;line-height:12px;color:#000;letter-spacing:0px;transform:scaleX(0.875);transform-origin:50% 0;">Members</span><div class="b" style="left:496px;top:186px;width:100px;height:19px;background:#f0f0f0;border:1px solid #d9d9d9;"></div><span class="t" style="left:496px;width:99px;text-align:center;top:190px;font-size:12px;line-height:12px;color:#000;letter-spacing:0px;transform:scaleX(0.875);transform-origin:50% 0;">Member Of</span><div class="b" style="left:595px;top:186px;width:106px;height:19px;background:#f0f0f0;border:1px solid #d9d9d9;"></div><span class="t" style="left:595px;width:105px;text-align:center;top:190px;font-size:12px;line-height:12px;color:#000;letter-spacing:0px;transform:scaleX(0.875);transform-origin:50% 0;">Managed By</span><div class="b" style="left:321px;top:204px;width:112px;height:19px;background:#f0f0f0;border:1px solid #d9d9d9;"></div><span class="t" style="left:321px;width:112px;text-align:center;top:208px;font-size:12px;line-height:12px;color:#000;letter-spacing:0px;transform:scaleX(0.875);transform-origin:50% 0;">Object</span><div class="b" style="left:554px;top:204px;width:147px;height:19px;background:#f0f0f0;border:1px solid #d9d9d9;"></div><span class="t" style="left:554px;width:147px;text-align:center;top:208px;font-size:12px;line-height:12px;color:#000;letter-spacing:0px;transform:scaleX(0.875);transform-origin:50% 0;">Attribute Editor</span><div class="b" style="left:432px;top:202px;width:123px;height:22px;background:#fff;border:1px solid #d9d9d9;border-bottom:none;"></div><span class="t" style="left:432px;width:123px;text-align:center;top:206px;font-size:12px;line-height:12px;color:#000;letter-spacing:0px;transform:scaleX(0.875);transform-origin:50% 0;">Security</span><span class="t" style="left:334px;top:232px;font-size:12px;line-height:12px;color:#000;letter-spacing:0px;transform:scaleX(0.875);transform-origin:0 0;">Group or user names:</span><div class="b" style="left:334px;top:248px;width:356px;height:103px;background:#fff;border:1px solid #7a7a7a;"></div><div class="b" style="left:356px;top:318px;width:315px;height:17px;background:#ebebeb;"></div><div class="c" style="left:335px;top:249px;width:336px;height:101px;"><svg class="b" style="left:5px;top:2px;" width="16" height="16" viewBox="0 0 16 16"><use href="#gd"/></svg><span class="t" style="left:23px;top:4px;font-size:12px;line-height:12px;color:#000;letter-spacing:0px;transform:scaleX(0.875);transform-origin:0 0;">SELF</span><svg class="b" style="left:5px;top:19px;" width="16" height="16" viewBox="0 0 16 16"><use href="#gd"/></svg><span class="t" style="left:23px;top:21px;font-size:12px;line-height:12px;color:#000;letter-spacing:0px;transform:scaleX(0.875);transform-origin:0 0;">Authenticated Users</span><svg class="b" style="left:5px;top:36px;" width="16" height="16" viewBox="0 0 16 16"><use href="#gd"/></svg><span class="t" style="left:23px;top:38px;font-size:12px;line-height:12px;color:#000;letter-spacing:0px;transform:scaleX(0.875);transform-origin:0 0;">SYSTEM</span><svg class="b" style="left:7px;top:52px;" width="12" height="16" viewBox="0 0 12 16"><use href="#ug"/></svg><span class="t" style="left:23px;top:55px;font-size:12px;line-height:12px;color:#000;letter-spacing:0px;transform:scaleX(0.875);transform-origin:0 0;">kirk.carey</span><svg class="b" style="left:7px;top:69px;" width="12" height="16" viewBox="0 0 12 16"><use href="#ud"/></svg><span class="t" style="left:23px;top:72px;font-size:12px;line-height:12px;color:#000;letter-spacing:0px;transform:scaleX(0.875);transform-origin:0 0;">Lauren George (lauren.george@cayosoftlab1.com)</span><svg class="b" style="left:5px;top:87px;" width="16" height="16" viewBox="0 0 16 16"><use href="#gd"/></svg><span class="t" style="left:23px;top:89px;font-size:12px;line-height:12px;color:#000;letter-spacing:0px;transform:scaleX(0.875);transform-origin:0 0;">Domain Admins (CAYOSOFTLAB1\Domain Admins)</span></div><div class="b" style="left:672px;top:250px;width:16px;height:100px;background:#f0f0f0;"></div><div class="b" style="left:672px;top:271px;width:16px;height:22px;background:#cdcdcd;"></div><svg class="b" style="left:675px;top:256px;" width="9" height="6" viewBox="0 0 9 6"><use href="#au"/></svg><svg class="b" style="left:675px;top:338px;" width="9" height="6" viewBox="0 0 9 6"><use href="#ad"/></svg><div class="b" style="left:534px;top:358px;width:73px;height:21px;background:#e1e1e1;border:1px solid #adadad;"></div><span class="t" style="left:534px;width:73px;text-align:center;top:363px;font-size:12px;line-height:12px;color:#000;letter-spacing:0px;transform:scaleX(0.875);transform-origin:50% 0;">Add...</span><div class="b" style="left:615px;top:358px;width:73px;height:21px;background:#e1e1e1;border:1px solid #adadad;"></div><span class="t" style="left:615px;width:73px;text-align:center;top:363px;font-size:12px;line-height:12px;color:#000;letter-spacing:0px;transform:scaleX(0.875);transform-origin:50% 0;">Remove</span><span class="t" style="left:334px;top:394px;font-size:12px;line-height:12px;color:#000;letter-spacing:0px;transform:scaleX(0.875);transform-origin:0 0;">Permissions for Lauren George</span><span class="t" style="left:579px;top:394px;font-size:12px;line-height:12px;color:#000;letter-spacing:0px;transform:scaleX(0.875);transform-origin:0 0;">Allow</span><span class="t" style="left:640px;top:394px;font-size:12px;line-height:12px;color:#000;letter-spacing:0px;transform:scaleX(0.875);transform-origin:0 0;">Deny</span><div class="b" style="left:334px;top:409px;width:356px;height:99px;background:#fff;border:1px solid #646464;"></div><div class="c" style="left:335px;top:410px;width:338px;height:97px;"><span class="t" style="left:11px;top:6px;font-size:12px;line-height:12px;color:#000;letter-spacing:0px;transform:scaleX(0.875);transform-origin:0 0;">Full control</span><svg class="b" style="left:246px;top:5px" width="13" height="13" viewBox="0 0 13 13"><rect x=".5" y=".5" width="12" height="12" fill="#fff" stroke="#333"/><path d="M2.6 6.6 L5.2 9.2 L10.4 3.6" fill="none" stroke="#4a4a4a" stroke-width="1.4"/></svg><svg class="b" style="left:306px;top:5px" width="13" height="13" viewBox="0 0 13 13"><rect x=".5" y=".5" width="12" height="12" fill="#fff" stroke="#333"/></svg><span class="t" style="left:11px;top:24px;font-size:12px;line-height:12px;color:#000;letter-spacing:0px;transform:scaleX(0.875);transform-origin:0 0;">Read</span><svg class="b" style="left:246px;top:23px" width="13" height="13" viewBox="0 0 13 13"><rect x=".5" y=".5" width="12" height="12" fill="#fff" stroke="#333"/><path d="M2.6 6.6 L5.2 9.2 L10.4 3.6" fill="none" stroke="#4a4a4a" stroke-width="1.4"/></svg><svg class="b" style="left:306px;top:23px" width="13" height="13" viewBox="0 0 13 13"><rect x=".5" y=".5" width="12" height="12" fill="#fff" stroke="#333"/></svg><span class="t" style="left:11px;top:42px;font-size:12px;line-height:12px;color:#000;letter-spacing:0px;transform:scaleX(0.875);transform-origin:0 0;">Write</span><svg class="b" style="left:246px;top:41px" width="13" height="13" viewBox="0 0 13 13"><rect x=".5" y=".5" width="12" height="12" fill="#fff" stroke="#333"/><path d="M2.6 6.6 L5.2 9.2 L10.4 3.6" fill="none" stroke="#4a4a4a" stroke-width="1.4"/></svg><svg class="b" style="left:306px;top:41px" width="13" height="13" viewBox="0 0 13 13"><rect x=".5" y=".5" width="12" height="12" fill="#fff" stroke="#333"/></svg><span class="t" style="left:11px;top:60px;font-size:12px;line-height:12px;color:#000;letter-spacing:0px;transform:scaleX(0.875);transform-origin:0 0;">Create all child objects</span><svg class="b" style="left:246px;top:59px" width="13" height="13" viewBox="0 0 13 13"><rect x=".5" y=".5" width="12" height="12" fill="#fff" stroke="#333"/><path d="M2.6 6.6 L5.2 9.2 L10.4 3.6" fill="none" stroke="#4a4a4a" stroke-width="1.4"/></svg><svg class="b" style="left:306px;top:59px" width="13" height="13" viewBox="0 0 13 13"><rect x=".5" y=".5" width="12" height="12" fill="#fff" stroke="#333"/></svg><span class="t" style="left:11px;top:78px;font-size:12px;line-height:12px;color:#000;letter-spacing:0px;transform:scaleX(0.875);transform-origin:0 0;">Delete all child objects</span><svg class="b" style="left:246px;top:77px" width="13" height="13" viewBox="0 0 13 13"><rect x=".5" y=".5" width="12" height="12" fill="#fff" stroke="#333"/><path d="M2.6 6.6 L5.2 9.2 L10.4 3.6" fill="none" stroke="#4a4a4a" stroke-width="1.4"/></svg><svg class="b" style="left:306px;top:77px" width="13" height="13" viewBox="0 0 13 13"><rect x=".5" y=".5" width="12" height="12" fill="#fff" stroke="#333"/></svg><svg class="b" style="left:246px;top:95px" width="13" height="13" viewBox="0 0 13 13"><rect x=".5" y=".5" width="12" height="12" fill="#fff" stroke="#333"/><path d="M2.6 6.6 L5.2 9.2 L10.4 3.6" fill="none" stroke="#4a4a4a" stroke-width="1.4"/></svg><svg class="b" style="left:306px;top:95px" width="13" height="13" viewBox="0 0 13 13"><rect x=".5" y=".5" width="12" height="12" fill="#fff" stroke="#333"/></svg></div><div class="b" style="left:673px;top:410px;width:15px;height:97px;background:#f0f0f0;"></div><div class="b" style="left:673px;top:427px;width:15px;height:33px;background:#cdcdcd;"></div><svg class="b" style="left:676px;top:417px;" width="9" height="6" viewBox="0 0 9 6"><use href="#au"/></svg><svg class="b" style="left:676px;top:495px;" width="9" height="6" viewBox="0 0 9 6"><use href="#ad"/></svg><span class="t" style="left:334px;top:516px;font-size:12px;line-height:12px;color:#000;letter-spacing:0px;transform:scaleX(0.875);transform-origin:0 0;">For special permissions or advanced settings, click</span><span class="t" style="left:334px;top:529px;font-size:12px;line-height:12px;color:#000;letter-spacing:0px;transform:scaleX(0.875);transform-origin:0 0;">Advanced.</span><div class="b" style="left:600px;top:516px;width:88px;height:21px;background:#e1e1e1;border:1px solid #adadad;"></div><span class="t" style="left:600px;width:88px;text-align:center;top:521px;font-size:12px;line-height:12px;color:#000;letter-spacing:0px;transform:scaleX(0.875);transform-origin:50% 0;">Advanced</span><div class="b" style="left:388px;top:589px;width:73px;height:21px;background:#e1e1e1;border:1px solid #adadad;"></div><span class="t" style="left:388px;width:73px;text-align:center;top:594px;font-size:12px;line-height:12px;color:#000;letter-spacing:0px;transform:scaleX(0.875);transform-origin:50% 0;">OK</span><div class="b" style="left:469px;top:589px;width:73px;height:21px;background:#e1e1e1;border:1px solid #adadad;"></div><span class="t" style="left:469px;width:73px;text-align:center;top:594px;font-size:12px;line-height:12px;color:#000;letter-spacing:0px;transform:scaleX(0.875);transform-origin:50% 0;">Cancel</span><div class="b" style="left:550px;top:589px;width:73px;height:21px;background:#cccccc;border:1px solid #bfbfbf;"></div><span class="t" style="left:550px;width:73px;text-align:center;top:594px;font-size:12px;line-height:12px;color:#838383;letter-spacing:0px;transform:scaleX(0.875);transform-origin:50% 0;">Apply</span><div class="b" style="left:631px;top:589px;width:73px;height:21px;background:#cccccc;border:1px solid #bfbfbf;"></div><span class="t" style="left:631px;width:73px;text-align:center;top:594px;font-size:12px;line-height:12px;color:#838383;letter-spacing:0px;transform:scaleX(0.875);transform-origin:50% 0;">Help</span><div class="b" style="left:722px;top:162px;width:767px;height:520px;background:#f0f0f0;border:1px solid #5a5a5a;box-shadow:1px 1px 0 rgba(0,0,0,.10);"></div><div class="b" style="left:723px;top:163px;width:765px;height:30px;background:#fff;"></div><svg class="b" style="left:734px;top:171px;" width="10" height="13" viewBox="0 0 10 13"><path d="M0 0.5 H7 V9.5 H9.4 V11.2 H3 V12.4 H0Z" fill="#f7d774"/><path d="M2.2 1.2 H7 V9.5 H2.2Z" fill="#fbe49a"/><path d="M0 .5 H2.2 V12.4 H0Z" fill="#fdeeb0"/></svg><span class="t" style="left:752px;top:172px;font-size:12px;line-height:12px;color:#000;letter-spacing:-0.111px;">Advanced Security Settings for Domain Users</span><svg class="b" style="left:1369px;top:172px;" width="11" height="11" viewBox="0 0 11 11"><path d="M0 5.5 H10" stroke="#ccc" stroke-width="1"/></svg><svg class="b" style="left:1414px;top:172px;" width="10" height="10" viewBox="0 0 10 10"><rect x=".5" y=".5" width="9" height="9" fill="none" stroke="#000"/></svg><svg class="b" style="left:1460px;top:172px;" width="11" height="11" viewBox="0 0 11 11"><path d="M0.5 0.5 L10.5 10.5 M10.5 0.5 L0.5 10.5" stroke="#000" stroke-width="1.1"/></svg><div class="b" style="left:734px;top:204px;width:743px;height:440px;background:#fff;border:1px solid #acacac;"></div><span class="t" style="left:746px;top:233px;font-size:12px;line-height:12px;color:#000;letter-spacing:-0.188px;">Owner:</span><span class="t" style="left:834px;top:232px;font-size:12px;line-height:12px;color:#000;letter-spacing:-0.088px;">Domain Admins (CAYOSOFTLAB1\Domain Admins)</span><span class="t" style="left:1118px;top:232px;font-size:12px;line-height:12px;color:#0066cc;letter-spacing:-0.268px;">Change</span><div class="b" style="left:735px;top:283px;width:741px;height:1px;background:#acacac;"></div><div class="b" style="left:829px;top:262px;width:96px;height:22px;background:#f0f0f0;border:1px solid #d0d0d0;border-bottom:1px solid #acacac;"></div><div class="b" style="left:924px;top:262px;width:97px;height:22px;background:#f0f0f0;border:1px solid #d0d0d0;border-bottom:1px solid #acacac;"></div><div class="b" style="left:735px;top:262px;width:95px;height:23px;background:#fff;border:1px solid #d0d0d0;border-bottom:none;border-left:1px solid #acacac;"></div><span class="t" style="left:751px;top:267px;font-size:12px;line-height:12px;color:#000;letter-spacing:-0.271px;">Permissions</span><span class="t" style="left:854px;top:267px;font-size:12px;line-height:12px;color:#000;letter-spacing:0.241px;">Auditing</span><span class="t" style="left:931px;top:267px;font-size:12px;line-height:12px;color:#000;letter-spacing:-0.26px;">Effective Access</span><span class="t" style="left:746px;top:302px;font-size:12px;line-height:12px;color:#000;letter-spacing:0.007px;">For additional information, double-click a permission entry. To modify a permission entry, select the entry and click Edit (if available).</span><span class="t" style="left:746px;top:328px;font-size:12px;line-height:12px;color:#000;letter-spacing:-0.173px;">Permission entries:</span><div class="b" style="left:744px;top:348px;width:721px;height:216px;background:#fff;border:1px solid #646464;"></div><div class="b" style="left:765px;top:349px;width:1px;height:24px;background:#e5e5e5;"></div><div class="b" style="left:814px;top:349px;width:1px;height:24px;background:#e5e5e5;"></div><div class="b" style="left:989px;top:349px;width:1px;height:24px;background:#e5e5e5;"></div><div class="b" style="left:1129px;top:349px;width:1px;height:24px;background:#e5e5e5;"></div><div class="b" style="left:1269px;top:349px;width:1px;height:24px;background:#e5e5e5;"></div><div class="b" style="left:1446px;top:349px;width:1px;height:24px;background:#e5e5e5;"></div><span class="t" style="left:772px;top:355px;font-size:12px;line-height:12px;color:#000;letter-spacing:-0.154px;">Type</span><span class="t" style="left:821px;top:355px;font-size:12px;line-height:12px;color:#000;letter-spacing:-0.104px;">Principal</span><span class="t" style="left:996px;top:355px;font-size:12px;line-height:12px;color:#000;letter-spacing:-0.566px;">Access</span><span class="t" style="left:1136px;top:355px;font-size:12px;line-height:12px;color:#000;letter-spacing:0.147px;">Inherited from</span><span class="t" style="left:1276px;top:355px;font-size:12px;line-height:12px;color:#000;letter-spacing:0.072px;">Applies to</span><svg class="b" style="left:749px;top:375px;" width="16" height="16" viewBox="0 0 16 16"><use href="#gd"/></svg><span class="t" style="left:772px;top:377px;font-size:12px;line-height:12px;color:#000;letter-spacing:0.113px;">Allow</span><span class="t" style="left:821px;top:377px;font-size:12px;line-height:12px;color:#000;letter-spacing:-0.025px;">Windows Authorization Acce...</span><span class="t" style="left:1136px;top:377px;font-size:12px;line-height:12px;color:#000;letter-spacing:0.094px;">None</span><span class="t" style="left:1276px;top:377px;font-size:12px;line-height:12px;color:#000;letter-spacing:-0.022px;">This object only</span><svg class="b" style="left:749px;top:394px;" width="16" height="16" viewBox="0 0 16 16"><use href="#gd"/></svg><span class="t" style="left:772px;top:396px;font-size:12px;line-height:12px;color:#000;letter-spacing:0.113px;">Allow</span><span class="t" style="left:821px;top:396px;font-size:12px;line-height:12px;color:#000;letter-spacing:-0.076px;">Authenticated Users</span><span class="t" style="left:996px;top:396px;font-size:12px;line-height:12px;color:#000;letter-spacing:-0.069px;">Send to</span><span class="t" style="left:1136px;top:396px;font-size:12px;line-height:12px;color:#000;letter-spacing:0.094px;">None</span><span class="t" style="left:1276px;top:396px;font-size:12px;line-height:12px;color:#000;letter-spacing:-0.022px;">This object only</span><svg class="b" style="left:749px;top:413px;" width="16" height="16" viewBox="0 0 16 16"><use href="#gd"/></svg><span class="t" style="left:772px;top:415px;font-size:12px;line-height:12px;color:#000;letter-spacing:0.113px;">Allow</span><span class="t" style="left:821px;top:415px;font-size:12px;line-height:12px;color:#000;letter-spacing:-0.279px;">Domain Admins (CAYOSOFT...</span><span class="t" style="left:996px;top:415px;font-size:12px;line-height:12px;color:#000;letter-spacing:0.049px;">Full control</span><span class="t" style="left:1136px;top:415px;font-size:12px;line-height:12px;color:#000;letter-spacing:0.094px;">None</span><span class="t" style="left:1276px;top:415px;font-size:12px;line-height:12px;color:#000;letter-spacing:-0.022px;">This object only</span><div class="b" style="left:765px;top:430px;width:682px;height:19px;background:#0078d7;"></div><svg class="b" style="left:751px;top:431px;" width="12" height="16" viewBox="0 0 12 16"><use href="#us"/></svg><span class="t" style="left:772px;top:434px;font-size:12px;line-height:12px;color:#fff;letter-spacing:0.113px;">Allow</span><span class="t" style="left:821px;top:434px;font-size:12px;line-height:12px;color:#fff;letter-spacing:-0.178px;">Lauren George (lauren.georg...</span><span class="t" style="left:996px;top:434px;font-size:12px;line-height:12px;color:#fff;letter-spacing:0.049px;">Full control</span><span class="t" style="left:1136px;top:434px;font-size:12px;line-height:12px;color:#fff;letter-spacing:0.094px;">None</span><span class="t" style="left:1276px;top:434px;font-size:12px;line-height:12px;color:#fff;letter-spacing:-0.022px;">This object only</span><svg class="b" style="left:749px;top:451px;" width="16" height="16" viewBox="0 0 16 16"><use href="#gd"/></svg><span class="t" style="left:772px;top:453px;font-size:12px;line-height:12px;color:#000;letter-spacing:0.113px;">Allow</span><span class="t" style="left:821px;top:453px;font-size:12px;line-height:12px;color:#000;letter-spacing:-0.249px;">Account Operators (CAYOSO...</span><span class="t" style="left:996px;top:453px;font-size:12px;line-height:12px;color:#000;letter-spacing:0.049px;">Full control</span><span class="t" style="left:1136px;top:453px;font-size:12px;line-height:12px;color:#000;letter-spacing:0.094px;">None</span><span class="t" style="left:1276px;top:453px;font-size:12px;line-height:12px;color:#000;letter-spacing:-0.022px;">This object only</span><svg class="b" style="left:749px;top:470px;" width="16" height="16" viewBox="0 0 16 16"><use href="#gd"/></svg><span class="t" style="left:772px;top:472px;font-size:12px;line-height:12px;color:#000;letter-spacing:0.113px;">Allow</span><span class="t" style="left:821px;top:472px;font-size:12px;line-height:12px;color:#000;letter-spacing:-1.513px;">SELF</span><span class="t" style="left:996px;top:472px;font-size:12px;line-height:12px;color:#000;letter-spacing:-0.314px;">Special</span><span class="t" style="left:1136px;top:472px;font-size:12px;line-height:12px;color:#000;letter-spacing:0.094px;">None</span><span class="t" style="left:1276px;top:472px;font-size:12px;line-height:12px;color:#000;letter-spacing:-0.022px;">This object only</span><svg class="b" style="left:749px;top:489px;" width="16" height="16" viewBox="0 0 16 16"><use href="#gd"/></svg><span class="t" style="left:772px;top:491px;font-size:12px;line-height:12px;color:#000;letter-spacing:0.113px;">Allow</span><span class="t" style="left:821px;top:491px;font-size:12px;line-height:12px;color:#000;letter-spacing:-0.076px;">Authenticated Users</span><span class="t" style="left:996px;top:491px;font-size:12px;line-height:12px;color:#000;letter-spacing:-0.314px;">Special</span><span class="t" style="left:1136px;top:491px;font-size:12px;line-height:12px;color:#000;letter-spacing:0.094px;">None</span><span class="t" style="left:1276px;top:491px;font-size:12px;line-height:12px;color:#000;letter-spacing:-0.022px;">This object only</span><svg class="b" style="left:749px;top:508px;" width="16" height="16" viewBox="0 0 16 16"><use href="#gd"/></svg><span class="t" style="left:772px;top:510px;font-size:12px;line-height:12px;color:#000;letter-spacing:0.113px;">Allow</span><span class="t" style="left:821px;top:510px;font-size:12px;line-height:12px;color:#000;letter-spacing:-1.135px;">SYSTEM</span><span class="t" style="left:996px;top:510px;font-size:12px;line-height:12px;color:#000;letter-spacing:0.049px;">Full control</span><span class="t" style="left:1136px;top:510px;font-size:12px;line-height:12px;color:#000;letter-spacing:0.094px;">None</span><span class="t" style="left:1276px;top:510px;font-size:12px;line-height:12px;color:#000;letter-spacing:-0.022px;">This object only</span><svg class="b" style="left:749px;top:527px;" width="16" height="16" viewBox="0 0 16 16"><use href="#gd"/></svg><span class="t" style="left:772px;top:529px;font-size:12px;line-height:12px;color:#000;letter-spacing:0.113px;">Allow</span><span class="t" style="left:821px;top:529px;font-size:12px;line-height:12px;color:#000;letter-spacing:-0.494px;">Key Admins (CAYOSOFTLAB...</span><span class="t" style="left:1136px;top:529px;font-size:12px;line-height:12px;color:#000;letter-spacing:-0.179px;">DC=cayosoftlab1,DC=...</span><span class="t" style="left:1276px;top:529px;font-size:12px;line-height:12px;color:#000;letter-spacing:-0.157px;">This object and all descendan...</span><svg class="b" style="left:749px;top:546px;" width="16" height="16" viewBox="0 0 16 16"><use href="#gd"/></svg><span class="t" style="left:772px;top:548px;font-size:12px;line-height:12px;color:#000;letter-spacing:0.113px;">Allow</span><span class="t" style="left:821px;top:548px;font-size:12px;line-height:12px;color:#000;letter-spacing:-0.209px;">Enterprise Key Admins (CAY...</span><span class="t" style="left:1136px;top:548px;font-size:12px;line-height:12px;color:#000;letter-spacing:-0.179px;">DC=cayosoftlab1,DC=...</span><span class="t" style="left:1276px;top:548px;font-size:12px;line-height:12px;color:#000;letter-spacing:-0.157px;">This object and all descendan...</span><div class="b" style="left:1448px;top:349px;width:16px;height:214px;background:#f0f0f0;"></div><div class="b" style="left:1448px;top:366px;width:16px;height:72px;background:#cdcdcd;"></div><svg class="b" style="left:1451px;top:355px;" width="9" height="6" viewBox="0 0 9 6"><use href="#au"/></svg><svg class="b" style="left:1451px;top:552px;" width="9" height="6" viewBox="0 0 9 6"><use href="#ad"/></svg><div class="b" style="left:745px;top:576px;width:76px;height:21px;background:#e1e1e1;border:1px solid #adadad;"></div><span class="t" style="left:745px;width:76px;text-align:center;top:581px;font-size:12px;line-height:12px;color:#000;letter-spacing:0.169px;">Add</span><div class="b" style="left:830px;top:576px;width:77px;height:21px;background:#e1e1e1;border:1px solid #adadad;"></div><span class="t" style="left:830px;width:77px;text-align:center;top:581px;font-size:12px;line-height:12px;color:#000;letter-spacing:-0.31px;">Remove</span><div class="b" style="left:916px;top:576px;width:77px;height:21px;background:#e1e1e1;border:1px solid #adadad;"></div><span class="t" style="left:916px;width:77px;text-align:center;top:581px;font-size:12px;line-height:12px;color:#000;letter-spacing:-0.144px;">Edit</span><div class="b" style="left:1346px;top:576px;width:118px;height:21px;background:#e1e1e1;border:1px solid #adadad;"></div><span class="t" style="left:1346px;width:118px;text-align:center;top:581px;font-size:12px;line-height:12px;color:#000;letter-spacing:-0.122px;">Restore defaults</span><div class="b" style="left:745px;top:610px;width:134px;height:21px;background:#e1e1e1;border:1px solid #adadad;"></div><span class="t" style="left:745px;width:134px;text-align:center;top:615px;font-size:12px;line-height:12px;color:#000;letter-spacing:-0.075px;">Disable inheritance</span><div class="b" style="left:1245px;top:652px;width:71px;height:21px;background:#e1e1e1;border:2px solid #0078d7;"></div><span class="t" style="left:1245px;width:71px;text-align:center;top:657px;font-size:12px;line-height:12px;color:#000;letter-spacing:-0.66px;">OK</span><div class="b" style="left:1325px;top:652px;width:71px;height:21px;background:#e1e1e1;border:1px solid #adadad;"></div><span class="t" style="left:1325px;width:71px;text-align:center;top:657px;font-size:12px;line-height:12px;color:#000;letter-spacing:-0.387px;">Cancel</span><div class="b" style="left:1405px;top:652px;width:71px;height:21px;background:#cccccc;border:1px solid #bfbfbf;"></div><span class="t" style="left:1405px;width:71px;text-align:center;top:657px;font-size:12px;line-height:12px;color:#838383;letter-spacing:0.105px;">Apply</span>
</body></html>
